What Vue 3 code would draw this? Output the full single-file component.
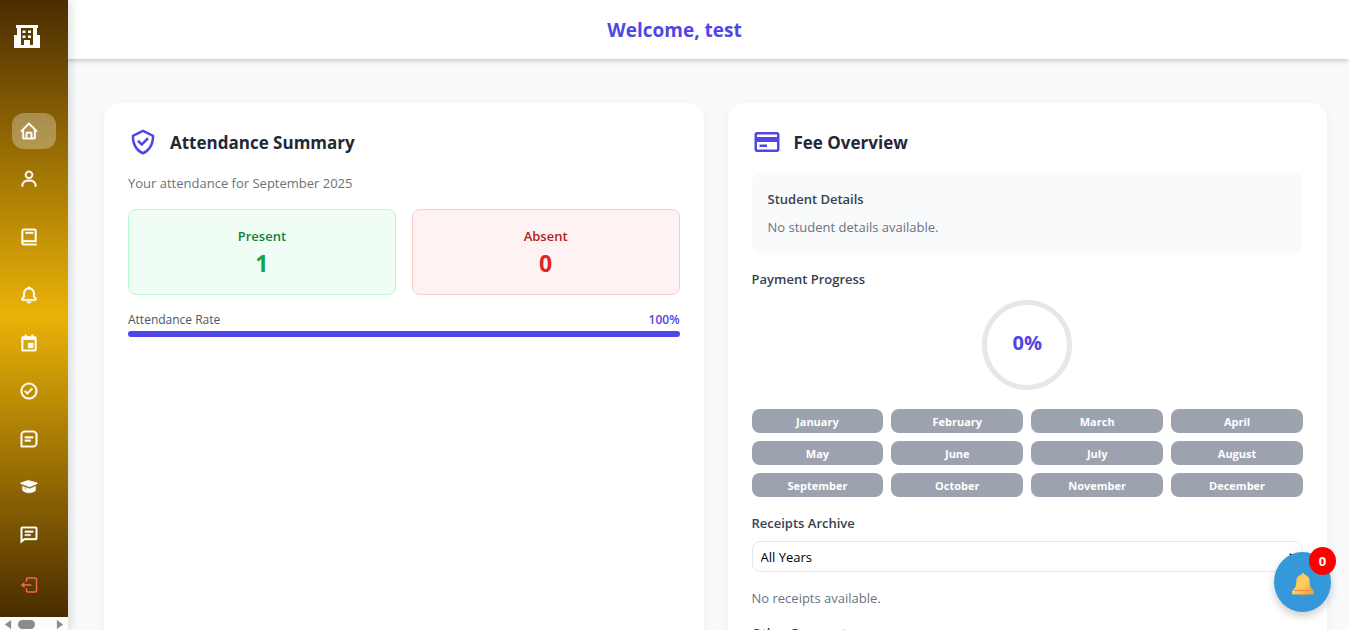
<script setup>
import { ref } from 'vue'

const months = ['January', 'February', 'March', 'April', 'May', 'June', 'July', 'August', 'September', 'October', 'November', 'December']
const year = ref('All Years')

const links = [
  { name: 'Home', active: true, paths: ['M3 13h1v7c0 1.103.897 2 2 2h12c1.103 0 2-.897 2-2v-7h1a1 1 0 0 0 .707-1.707l-9-9a.999.999 0 0 0-1.414 0l-9 9A1 1 0 0 0 3 13zm7 7v-5h4v5h-4zm2-15.586 6 6V15l.001 5H16v-5c0-1.103-.897-2-2-2h-4c-1.103 0-2 .897-2 2v5H6v-9.586l6-6z'] },
  { name: 'Profile', paths: ['M12 2a5 5 0 1 0 5 5 5 5 0 0 0-5-5zm0 8a3 3 0 1 1 3-3 3 3 0 0 1-3 3zm9 11v-1a7 7 0 0 0-7-7h-4a7 7 0 0 0-7 7v1h2v-1a5 5 0 0 1 5-5h4a5 5 0 0 1 5 5v1z'] },
  { name: 'Courses', wide: true, paths: ['M6 22h15v-2H6.012C5.55 19.988 5 19.805 5 19s.55-.988 1.012-1H21V4c0-1.103-.897-2-2-2H6c-1.206 0-3 .799-3 3v14c0 2.201 1.794 3 3 3zM5 8V5c0-.805.55-.988 1-1h13v12H5V8z', 'M8 6h9v2H8z'] },
  { name: 'Notices', wide: true, paths: ['M19 13.586V10c0-3.217-2.185-5.927-5.145-6.742C13.562 2.52 12.846 2 12 2s-1.562.52-1.855 1.258C7.185 4.074 5 6.783 5 10v3.586l-1.707 1.707A.996.996 0 0 0 3 16v2a1 1 0 0 0 1 1h16a1 1 0 0 0 1-1v-2a.996.996 0 0 0-.293-.707L19 13.586zM19 17H5v-.586l1.707-1.707A.996.996 0 0 0 7 14v-4c0-2.757 2.243-5 5-5s5 2.243 5 5v4c0 .266.105.52.293.707L19 16.414V17zm-7 5a2.98 2.98 0 0 0 2.818-2H9.182A2.98 2.98 0 0 0 12 22z'] },
  { name: 'Calendar', paths: ['M19 4h-2V2h-2v2H9V2H7v2H5c-1.103 0-2 .897-2 2v14c0 1.103.897 2 2 2h14c1.103 0 2-.897 2-2V6c0-1.103-.897-2-2-2zm0 16H5V8h14z', 'M11 12h6v6h-6z'] },
  { name: 'Attendance', paths: ['M12 2C6.486 2 2 6.486 2 12s4.486 10 10 10 10-4.486 10-10S17.514 2 12 2zm0 18c-4.411 0-8-3.589-8-8s3.589-8 8-8 8 3.589 8 8-3.589 8-8 8z', 'M9.999 13.587 7.7 11.292l-1.412 1.416 3.713 3.705 6.706-6.706-1.414-1.414z'] },
  { name: 'Assignments', paths: ['M7 2h10a5 5 0 0 1 5 5v10a5 5 0 0 1-5 5H3a1 1 0 0 1-1-1V7a5 5 0 0 1 5-5zm0 2a3 3 0 0 0-3 3v13h13a3 3 0 0 0 3-3V7a3 3 0 0 0-3-3z', 'M7 9h10v2H7zm0 4h7v2H7z'] },
  { name: 'Results', paths: ['M2 7v1l11 4 9-4V7L11 4z', 'M4 11v4.267c0 1.621 4.001 3.893 9 3.734 4-.126 6.586-1.972 7-3.467.024-.089.037-.178.037-.268V11L13 14l-5-1.667v3.213l-1-.364V12l-3-1z'] },
  { name: 'Messages', paths: ['M20 2H4a2 2 0 0 0-2 2v18l5-4h13a2 2 0 0 0 2-2V4a2 2 0 0 0-2-2zm0 14H6.3L4 17.8V4h16z', 'M7 7h10v2H7zm0 4h7v2H7z'] },
]
</script>

<template>
  <div class="page">
    <header class="topbar"><h1>Welcome, test</h1></header>

    <aside class="sidebar">
      <div class="rail">
        <svg class="logo" viewBox="0 0 26 24" aria-label="School">
          <path fill-rule="evenodd" d="M2 0h22v3h-1v7h3v13H0V10h3V3H2zM7 3v17h3v-5h6v5h3V3zM8.500 5.500h3v2.500h-3zM14 5.500h3v2.500h-3zM8.500 10.500h3v2.500h-3zM14 10.500h3v2.500h-3z" />
        </svg>
        <nav class="nav">
          <a v-for="l in links" :key="l.name" href="#" :aria-label="l.name" class="link" :class="{ active: l.active, wide: l.wide }">
            <svg viewBox="0 0 24 24"><path v-for="p in l.paths" :key="p" :d="p" fill-rule="evenodd" /></svg>
          </a>
          <a href="#" class="link logout" aria-label="Log out">
            <svg viewBox="0 0 24 24">
              <path class="line" d="M9 8V5a1.500 1.500 0 0 1 1.500-1.500h9A1.500 1.500 0 0 1 21 5v14a1.500 1.500 0 0 1-1.500 1.500h-9A1.500 1.500 0 0 1 9 19v-3M15 12H4" />
              <path d="m2 12 4.500-3.500v7z" />
            </svg>
          </a>
        </nav>
      </div>
      <div class="scroller" aria-hidden="true">
        <svg viewBox="0 0 7 10"><path d="M7 0v10L0 5z" /></svg>
        <span class="thumb"></span>
        <svg class="end" viewBox="0 0 7 10"><path d="M0 0v10l7-5z" /></svg>
      </div>
    </aside>

    <main class="content">
      <section class="card">
        <div class="title">
          <svg viewBox="0 0 24 24">
            <path d="M20.995 6.900a.998.998 0 0 0-.548-.795l-8-4a1 1 0 0 0-.895 0l-8 4a1.002 1.002 0 0 0-.547.795c-.011.107-.961 10.767 8.589 15.014a.987.987 0 0 0 .812 0c9.550-4.247 8.600-14.906 8.589-15.014zM12 19.897C5.231 16.625 4.911 9.642 4.966 7.635L12 4.118l7.029 3.515c.037 1.989-.328 9.018-7.029 12.264z" />
            <path d="m11 12.586-2.293-2.293-1.414 1.414L11 15.414l5.707-5.707-1.414-1.414z" />
          </svg>
          <h2>Attendance Summary</h2>
        </div>
        <p class="muted">Your attendance for September 2025</p>
        <div class="stats">
          <div class="stat present"><span>Present</span><strong>1</strong></div>
          <div class="stat absent"><span>Absent</span><strong>0</strong></div>
        </div>
        <div class="rate"><span>Attendance Rate</span><b>100%</b></div>
        <div class="bar"><div class="fill" :style="{ width: '100%' }"></div></div>
      </section>

      <section class="card">
        <div class="title">
          <svg viewBox="0 0 24 24">
            <path fill-rule="evenodd" d="M20 4H4c-1.103 0-2 .897-2 2v12c0 1.103.897 2 2 2h16c1.103 0 2-.897 2-2V6c0-1.103-.897-2-2-2zM4 6h16v2H4zm0 12v-6h16v6z" />
            <path d="M6 14h6v2H6z" />
          </svg>
          <h2>Fee Overview</h2>
        </div>
        <div class="details">
          <h3>Student Details</h3>
          <p class="muted">No student details available.</p>
        </div>
        <h3 class="gap">Payment Progress</h3>
        <div class="ring">0%</div>
        <div class="months"><span v-for="m in months" :key="m">{{ m }}</span></div>
        <h3 class="gap"><label for="year">Receipts Archive</label></h3>
        <select id="year" v-model="year"><option>All Years</option></select>
        <p class="muted none">No receipts available.</p>
        <h3 class="other">Other Payments</h3>
      </section>
    </main>

    <button class="fab" type="button" aria-label="Notifications">
      <svg viewBox="0 0 24 24">
        <defs>
          <linearGradient id="brass" x1="0" y1="0" x2="1" y2="1">
            <stop offset="0" stop-color="#ffb74a" />
            <stop offset="0.500" stop-color="#ffd05c" />
            <stop offset="1" stop-color="#f59438" />
          </linearGradient>
        </defs>
        <circle cx="12" cy="21.500" r="2" fill="#e8703f" />
        <path fill="url(#brass)" d="M12 0c1 0 1.500.600 1.500 1.500C17 2.300 18.500 5 18.700 8.500c.2 4.500.8 6.500 3.300 8.500 1.300 1 1.300 4.500 0 4.500H2C.700 21.500.700 18 2 17c2.500-2 3.100-4 3.300-8.500C5.500 5 7 2.300 10.500 1.500 10.500.600 11 0 12 0z" />
        <path fill="none" stroke="#ef8c3a" d="M3 17.500h18" />
      </svg>
      <span class="badge">0</span>
    </button>
  </div>
</template>

<style>
html, body { margin: 0; overflow: hidden; }
</style>

<style scoped>
* { box-sizing: border-box; }
h1, h2, h3, p { margin: 0; }
.page {
  position: relative;
  height: 100vh;
  overflow: hidden;
  background: #f9fafb;
  font-family: "Open Sans", "Noto Sans", sans-serif;
  font-size: 13px;
  line-height: 20px;
  color: #374151;
}
.topbar {
  position: relative;
  display: flex;
  align-items: center;
  justify-content: center;
  height: 59px;
  padding-top: 1px;
  background: #fff;
  box-shadow: 0 2px 5px rgba(0, 0, 0, 0.2);
}
h1 { font-size: 19px; line-height: 28px; font-weight: 700; color: #4f46e5; }
.sidebar {
  position: absolute;
  inset: 0 auto 0 0;
  width: 68px;
  display: flex;
  flex-direction: column;
  box-shadow: 2px 0 10px rgba(0, 0, 0, 0.15);
}
.rail {
  flex: 1;
  min-height: 0;
  padding: 25px 12px 0;
  background: linear-gradient(#4a2c00, #eab308 51%, #4a2c00);
}
.logo { display: block; width: 26px; height: 24px; margin-left: 2px; fill: #fff; }
.nav { display: flex; flex-direction: column; gap: 12px; margin-top: 64px; }
.link { display: flex; align-items: center; height: 36px; padding-left: 7px; border-radius: 12px; }
.link svg { width: 20px; height: 20px; fill: #fff; stroke: #fff; stroke-width: 0.4; }
.link.active { background: rgba(255, 255, 255, 0.3); }
.link.wide { margin-top: 10px; }
.link.logout { margin-top: 2px; }
.link.logout svg { fill: #f26558; stroke: none; }
.link .line { fill: none; stroke: #f26558; stroke-width: 1.8; }
.scroller { display: flex; align-items: center; height: 13px; padding: 2px 4px 0; background: #fcfcfc; }
.scroller svg { width: 8px; height: 9px; fill: #8b8b8b; }
.scroller .end { margin-left: auto; }
.thumb { width: 17px; height: 9px; margin-left: 6px; border-radius: 5px; background: #8b8b8b; }
.content {
  display: grid;
  grid-template-columns: 1fr 1fr;
  gap: 24px;
  padding: 44px 22px 24px 104px;
}
.card {
  min-width: 0;
  padding: 24px;
  border-radius: 16px;
  background: #fff;
  box-shadow: 0 4px 15px rgba(0, 0, 0, 0.05);
}
.title { display: flex; align-items: center; gap: 12px; height: 30px; margin-bottom: 16px; }
.title svg { width: 30px; height: 30px; fill: #4f46e5; }
h2 { padding-top: 2px; font-size: 17px; line-height: 28px; font-weight: 700; color: #1f2937; }
h3 { font-size: 13px; line-height: 20px; font-weight: 600; color: #374151; }
.title + .muted { margin-bottom: 16px; }
.muted { color: #6b7280; }
.stats { display: grid; grid-template-columns: 1fr 1fr; gap: 16px; }
.stat {
  display: flex;
  flex-direction: column;
  align-items: center;
  height: 86px;
  padding-top: 16px;
  border: 1px solid;
  border-radius: 8px;
}
.stat span { font-weight: 600; }
.stat strong { font-size: 23px; line-height: 34px; }
.present { background: #f0fdf4; border-color: #bbf7d0; color: #15803d; }
.present strong { color: #16a34a; }
.absent { background: #fef2f2; border-color: #fecaca; color: #b91c1c; }
.absent strong { color: #dc2626; }
.rate { display: flex; justify-content: space-between; margin-top: 16px; font-size: 12px; font-weight: 500; line-height: 18px; color: #4b5563; }
.rate b { font-weight: 600; color: #4f46e5; }
.bar { height: 6px; margin-top: 2px; border-radius: 3px; background: #e5e7eb; }
.fill { height: 6px; border-radius: 3px; background: #4f46e5; }
.details { height: 80px; padding: 16px; border-radius: 8px; background: #f9fafb; }
.details .muted { margin-top: 8px; }
.gap { margin-top: 16px; }
.ring {
  display: flex;
  align-items: center;
  justify-content: center;
  width: 90px;
  height: 90px;
  margin: 11px auto 19px;
  padding-bottom: 4px;
  border: 5px solid #e5e7eb;
  border-radius: 50%;
  font-size: 20px;
  font-weight: 700;
  color: #4f46e5;
}
.months { display: grid; grid-template-columns: repeat(4, 1fr); gap: 8px; }
.months span {
  height: 24px;
  padding-top: 1px;
  border-radius: 8px;
  background: #9ca3af;
  color: #fff;
  font-size: 11px;
  font-weight: 700;
  line-height: 24px;
  text-align: center;
}
select {
  display: block;
  width: 100%;
  height: 31px;
  margin-top: 8px;
  padding: 0 4px;
  border: 1px solid #e5e7eb;
  border-radius: 8px;
  background: #fff;
  font: inherit;
  color: #000;
}
.none { margin-top: 16px; }
.other { margin-top: 15px; }
.fab {
  position: absolute;
  right: 18px;
  bottom: 18px;
  width: 57px;
  height: 60px;
  padding: 8px 0 0;
  border: 0;
  border-radius: 50%;
  background: #3498db;
  box-shadow: 0 4px 8px rgba(0, 0, 0, 0.2);
}
.fab svg { width: 24px; height: 24px; }
.badge {
  position: absolute;
  top: -5px;
  right: -5px;
  width: 27px;
  height: 28px;
  border-radius: 50%;
  background: #f00;
  color: #fff;
  font: 700 13px/28px "Open Sans", sans-serif;
}
</style>
